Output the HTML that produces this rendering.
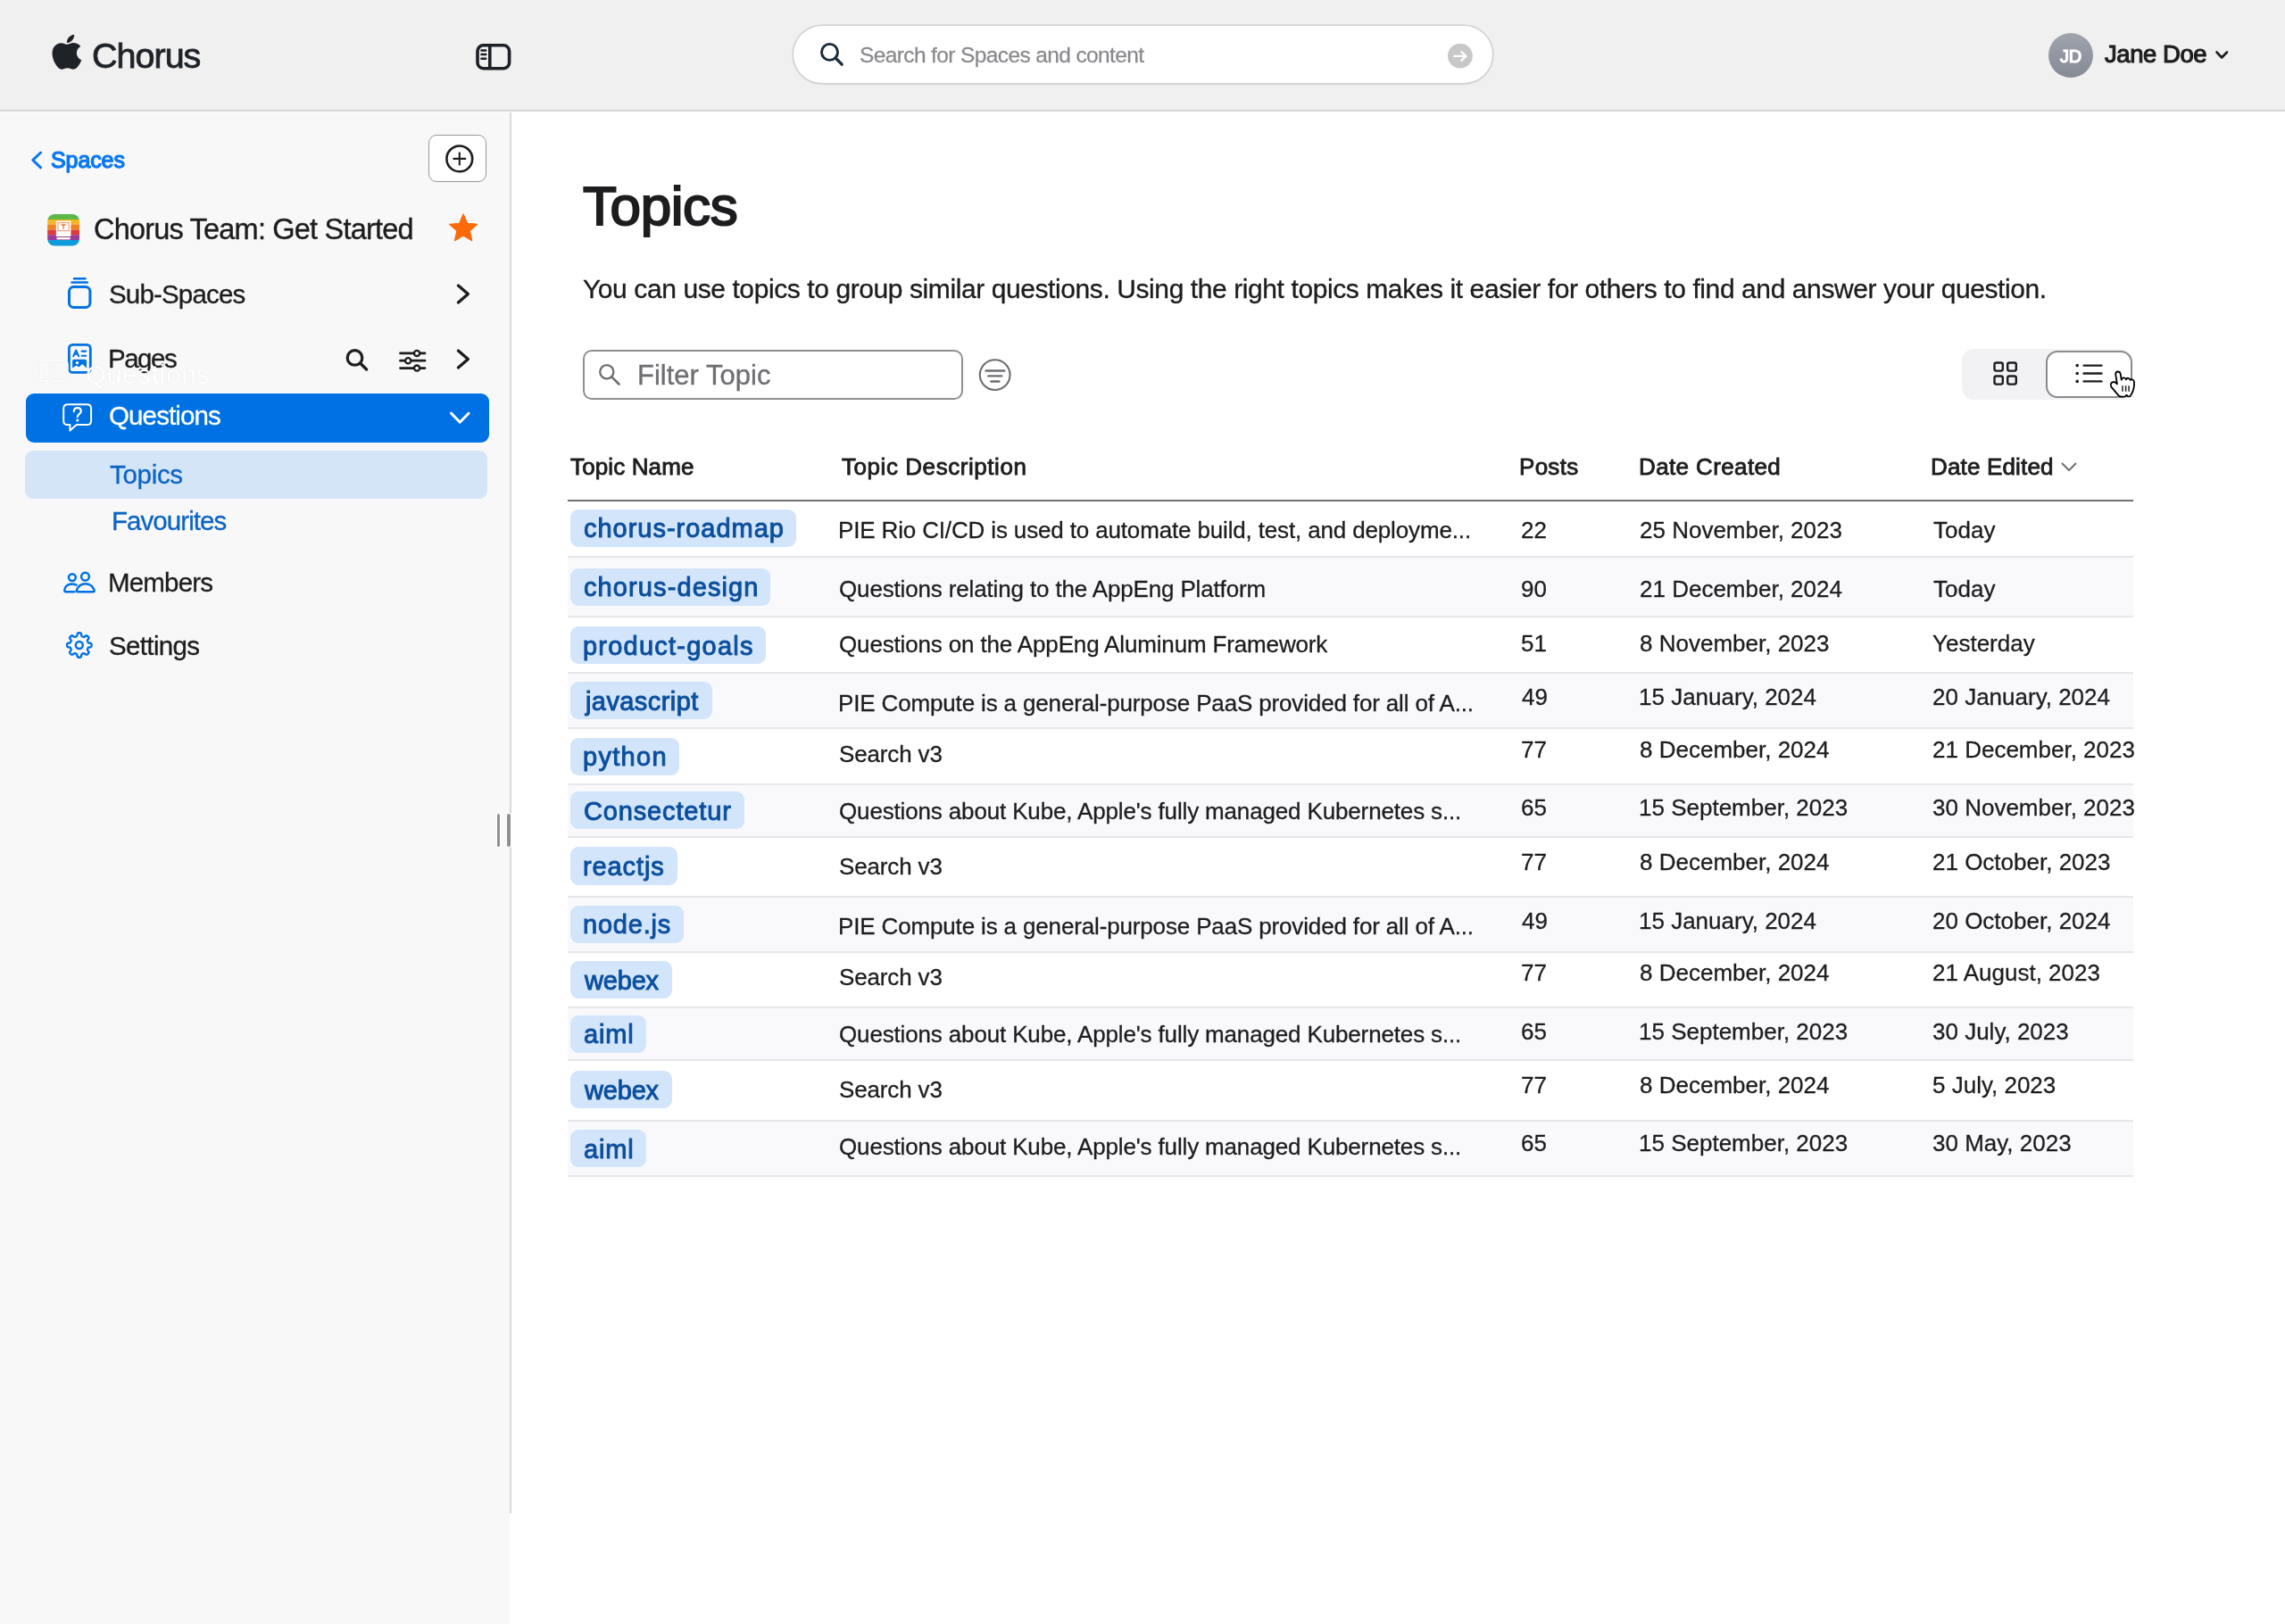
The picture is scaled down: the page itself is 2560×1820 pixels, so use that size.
<!DOCTYPE html>
<html><head><meta charset="utf-8"><title>Chorus Topics</title>
<style>
html,body{margin:0;padding:0;width:2560px;height:1820px;overflow:hidden;background:#fff;}
body{position:relative;font-family:'Liberation Sans', sans-serif;}
.b{position:absolute;}
.t{position:absolute;white-space:pre;line-height:1;font-family:'Liberation Sans', sans-serif;will-change:transform;}
svg.i{position:absolute;left:0;top:0;overflow:visible;}
</style></head><body>
<div class="b" style="left:0px;top:0px;width:2560px;height:123px;background:#f0f0f0;"></div><div class="b" style="left:0px;top:123px;width:2560px;height:1.5px;background:#d6d6d6;"></div><div class="b" style="left:0px;top:126px;width:571px;height:1694px;background:#f8f8f8;"></div><div class="b" style="left:571px;top:126px;width:1.5px;height:1570px;background:#d9d9d9;"></div><div class="b" style="left:888.7px;top:29.4px;width:783.0999999999999px;height:63.199999999999996px;background:#fff;border-radius:32px;box-shadow:0 0 0 1.5px #d0d0d0,0 1px 3px rgba(0,0,0,0.15);"></div><div class="b" style="left:2295px;top:37px;width:50px;height:50px;background:linear-gradient(#a0a4ad,#858a95);border-radius:50%;"></div><div class="b" style="left:480.4px;top:151.3px;width:64.89999999999998px;height:52.5px;background:#fff;border:1.8px solid #999;border-radius:9px;box-sizing:border-box;"></div><div class="b" style="left:28.6px;top:440.7px;width:519.0px;height:55.19999999999999px;background:#0071e3;border-radius:9px;"></div><div class="b" style="left:27.5px;top:505px;width:518.5px;height:54.39999999999998px;background:#d5e5f8;border-radius:9px;"></div><div class="b" style="left:653px;top:391.6px;width:425.5999999999999px;height:56.0px;background:#fff;border:2px solid #8e8e93;border-radius:10px;box-sizing:border-box;"></div><div class="b" style="left:2198px;top:391px;width:191px;height:57px;background:#f2f2f4;border-radius:14px;"></div><div class="b" style="left:2292px;top:393px;width:97px;height:53px;background:#fff;border:2px solid #8a8a8e;border-radius:13px;box-sizing:border-box;"></div><div class="b" style="left:636px;top:560px;width:1754px;height:2px;background:#6e6e73;"></div><div class="b" style="left:636px;top:623.4px;width:1754px;height:2.0px;background:#e6e6eb;"></div><div class="b" style="left:636px;top:625.4px;width:1754px;height:65.10000000000002px;background:#f9f9fb;"></div><div class="b" style="left:636px;top:689.5px;width:1754px;height:2.0px;background:#e6e6eb;"></div><div class="b" style="left:636px;top:753.2px;width:1754px;height:2.0px;background:#e6e6eb;"></div><div class="b" style="left:636px;top:755.2px;width:1754px;height:61.09999999999991px;background:#f9f9fb;"></div><div class="b" style="left:636px;top:815.3px;width:1754px;height:2.0px;background:#e6e6eb;"></div><div class="b" style="left:636px;top:877.6px;width:1754px;height:2.0px;background:#e6e6eb;"></div><div class="b" style="left:636px;top:879.6px;width:1754px;height:58.10000000000002px;background:#f9f9fb;"></div><div class="b" style="left:636px;top:936.7px;width:1754px;height:2.0px;background:#e6e6eb;"></div><div class="b" style="left:636px;top:1004.1px;width:1754px;height:2.0px;background:#e6e6eb;"></div><div class="b" style="left:636px;top:1006.1px;width:1754px;height:61.19999999999993px;background:#f9f9fb;"></div><div class="b" style="left:636px;top:1066.3px;width:1754px;height:2.0px;background:#e6e6eb;"></div><div class="b" style="left:636px;top:1128.3px;width:1754px;height:2.0px;background:#e6e6eb;"></div><div class="b" style="left:636px;top:1130.3px;width:1754px;height:57.90000000000009px;background:#f9f9fb;"></div><div class="b" style="left:636px;top:1187.2px;width:1754px;height:2.0px;background:#e6e6eb;"></div><div class="b" style="left:636px;top:1254.6px;width:1754px;height:2.0px;background:#e6e6eb;"></div><div class="b" style="left:636px;top:1256.6px;width:1754px;height:61.5px;background:#f9f9fb;"></div><div class="b" style="left:636px;top:1317.1px;width:1754px;height:2.0px;background:#e6e6eb;"></div><div class="b" style="left:638.6px;top:570.6px;width:253.39999999999998px;height:42.299999999999955px;background:#d3e5fb;border-radius:9px;"></div><div class="b" style="left:638.6px;top:636.5px;width:224.89999999999998px;height:42.0px;background:#d3e5fb;border-radius:9px;"></div><div class="b" style="left:638.6px;top:702px;width:219.39999999999998px;height:42px;background:#d3e5fb;border-radius:9px;"></div><div class="b" style="left:638.6px;top:764.4px;width:159.39999999999998px;height:42.10000000000002px;background:#d3e5fb;border-radius:9px;"></div><div class="b" style="left:638.6px;top:826.8px;width:122.19999999999993px;height:42.0px;background:#d3e5fb;border-radius:9px;"></div><div class="b" style="left:638.6px;top:887.2px;width:195.10000000000002px;height:42.19999999999993px;background:#d3e5fb;border-radius:9px;"></div><div class="b" style="left:638.6px;top:949.3px;width:120.0px;height:42.30000000000007px;background:#d3e5fb;border-radius:9px;"></div><div class="b" style="left:638.6px;top:1014.8px;width:127.39999999999998px;height:42.299999999999955px;background:#d3e5fb;border-radius:9px;"></div><div class="b" style="left:638.6px;top:1077.2px;width:114.89999999999998px;height:42.299999999999955px;background:#d3e5fb;border-radius:9px;"></div><div class="b" style="left:638.6px;top:1137.8px;width:85.10000000000002px;height:42.100000000000136px;background:#d3e5fb;border-radius:9px;"></div><div class="b" style="left:638.6px;top:1200.2px;width:114.89999999999998px;height:42.09999999999991px;background:#d3e5fb;border-radius:9px;"></div><div class="b" style="left:638.6px;top:1266.3px;width:85.10000000000002px;height:41.600000000000136px;background:#d3e5fb;border-radius:9px;"></div><div class="b" style="left:555.5px;top:911px;width:5.7999999999999545px;height:38.5px;background:#fff;border-radius:2px;"></div><div class="b" style="left:567.3px;top:911px;width:5.900000000000091px;height:38.5px;background:#fff;border-radius:2px;"></div><div class="b" style="left:556.5px;top:912px;width:3.7999999999999545px;height:36.5px;background:#909090;border-radius:2px;"></div><div class="b" style="left:568.3px;top:912px;width:3.900000000000091px;height:36.5px;background:#909090;border-radius:2px;"></div>
<svg class="i" width="2560" height="1820" viewBox="0 0 2560 1820"><path transform="translate(58.15,35.91) scale(0.0871)" fill="#1f2328" d="M318.7 268.7c-.2-36.7 16.4-64.4 50-84.8-18.8-26.9-47.2-41.7-84.7-44.6-35.5-2.8-74.3 20.7-88.5 20.7-15 0-49.4-19.7-76.4-19.7C63.3 141.2 4 184.8 4 273.5q0 39.3 14.4 81.2c12.8 36.7 59 126.7 107.2 125.2 25.2-.6 43-17.9 75.8-17.9 31.8 0 48.3 17.9 76.4 17.9 48.6-.7 90.4-82.5 102.6-119.3-65.2-30.7-61.7-90-61.7-91.9zm-56.6-164.2c27.3-32.4 24.8-61.9 24-72.5-24.1 1.4-52 16.4-67.9 34.9-17.5 19.8-27.8 44.3-25.6 71.9 26.1 2 49.9-11.4 69.5-34.3z"/><g fill="none" stroke="#1d2024" stroke-width="3.6" stroke-linecap="round"><rect x="535" y="50.8" width="35.6" height="25.9" rx="6.5"/><line x1="548.8" y1="51" x2="548.8" y2="76.5"/><g stroke-width="2.6"><line x1="539.5" y1="56.5" x2="544.2" y2="56.5"/><line x1="539.5" y1="61" x2="544.2" y2="61"/><line x1="539.5" y1="65.7" x2="544.2" y2="65.7"/></g></g><g fill="none" stroke="#1c2b3a" stroke-linecap="round"><circle cx="929.5" cy="58.4" r="9" stroke-width="2.9"/><line x1="936.2" y1="65.1" x2="943.2" y2="72.1" stroke-width="3.4"/></g><circle cx="1635.9" cy="62.7" r="13.9" fill="#c8c8c8"/><g fill="none" stroke="#fff" stroke-width="2.3" stroke-linecap="round" stroke-linejoin="round"><line x1="1629.3" y1="62.9" x2="1642.2" y2="62.9"/><polyline points="1637.3,58 1642.4,62.9 1637.3,67.8"/></g><polyline points="2483.5,58.5 2489.2,64.5 2495,58.5" fill="none" stroke="#1d1d1f" stroke-width="2.6" stroke-linecap="round" stroke-linejoin="round"/><polyline points="45.6,171 36.8,179.4 45.6,187.8" fill="none" stroke="#0a78f2" stroke-width="3" stroke-linecap="round" stroke-linejoin="round"/><g fill="none" stroke="#1d1d1f" stroke-width="2.6" stroke-linecap="round"><circle cx="514.8" cy="177.9" r="14.4"/><line x1="508.3" y1="177.9" x2="521.3" y2="177.9" stroke-width="2.1"/><line x1="514.8" y1="171.4" x2="514.8" y2="184.4" stroke-width="2.1"/></g><defs><clipPath id="sp"><rect x="53.2" y="240" width="35.8" height="35.6" rx="8"/></clipPath></defs><g clip-path="url(#sp)"><rect x="53" y="239" width="37" height="7" fill="#5cb946"/><rect x="53" y="246" width="37" height="5.6" fill="#f8b526"/><rect x="53" y="251.6" width="37" height="6" fill="#f08120"/><rect x="53" y="257.6" width="37" height="5.6" fill="#df3a3a"/><rect x="53" y="263.2" width="37" height="5.8" fill="#973d98"/><rect x="53" y="269" width="37" height="7" fill="#0d9ddb"/></g><rect x="62.8" y="247.6" width="16.6" height="17.4" fill="#fff" rx="0.8"/><rect x="65" y="249.6" width="12.2" height="9" fill="none" stroke="#f3a17a" stroke-width="1.2"/><path d="M68.5,252 h5 M71,252 v4.5" stroke="#f07030" stroke-width="1.3" fill="none"/><rect x="63.6" y="266" width="15" height="2.4" fill="#fff"/><polygon points="519.10,240.00 523.53,250.30 534.70,251.33 526.27,258.73 528.74,269.67 519.10,263.94 509.46,269.67 511.93,258.73 503.50,251.33 514.67,250.30" fill="#fa6a0a" stroke="#fa6a0a" stroke-width="1.2" stroke-linejoin="round"/><g fill="none" stroke="#0071e3" stroke-width="3" stroke-linecap="round"><rect x="77.5" y="321.5" width="23.4" height="23" rx="5"/><line x1="83" y1="312.2" x2="95.5" y2="312.2" stroke-width="2.4"/><line x1="80.5" y1="316.5" x2="97.8" y2="316.5" stroke-width="2.4"/></g><polyline points="513.4,320 524.4,329.5 513.4,339" fill="none" stroke="#1d1d1f" stroke-width="3.3" stroke-linecap="round" stroke-linejoin="round"/><polyline points="513.4,393 524.4,402.5 513.4,412" fill="none" stroke="#1d1d1f" stroke-width="3.3" stroke-linecap="round" stroke-linejoin="round"/><g fill="none" stroke="#0071e3" stroke-width="2.8"><rect x="77.4" y="386.4" width="23.9" height="31" rx="4"/></g><g fill="none" stroke="#0071e3" stroke-width="2.1" stroke-linecap="round" stroke-linejoin="round"><polyline points="82.3,399.2 85.2,392.6 88.1,399.2"/><line x1="83.4" y1="396.8" x2="87" y2="396.8"/><line x1="91.6" y1="393.6" x2="96.2" y2="393.6"/><line x1="91.6" y1="398.7" x2="96.2" y2="398.7"/></g><path d="M81.1,404.6 Q81.1,402.7 83,402.7 L95.1,402.7 Q97,402.7 97,404.6 L97,412.4 L92.2,407.9 L88.2,411.4 L85.8,409.5 L81.1,412.4 Z" fill="#0071e3"/><circle cx="86.5" cy="406.6" r="1.7" fill="#fff"/><g fill="none" stroke="#1d1d1f" stroke-linecap="round"><circle cx="397.5" cy="400.9" r="8.3" stroke-width="3.2"/><line x1="403.8" y1="407.3" x2="410.6" y2="414" stroke-width="3.4"/></g><g fill="none" stroke="#1d1d1f" stroke-width="2.7" stroke-linecap="round"><line x1="448.5" y1="395.9" x2="476" y2="395.9"/><line x1="448.5" y1="404.2" x2="476" y2="404.2"/><line x1="448.5" y1="412.6" x2="476" y2="412.6"/></g><g fill="#f8f8f8" stroke="#1d1d1f" stroke-width="2.3"><circle cx="467.1" cy="395.9" r="3.1"/><circle cx="457.2" cy="404.2" r="3.1"/><circle cx="467.1" cy="412.6" r="3.1"/></g><g transform="translate(0,0)" fill="none" stroke="#fff" stroke-width="2.0" stroke-linecap="round" stroke-linejoin="round" ><path d="M76.5,476 H75.8 C72.8,476 71.2,474.4 71.2,471.4 V457.8 C71.2,454.8 72.8,453.2 75.8,453.2 H97.5 C100.5,453.2 102.1,454.8 102.1,457.8 V471.4 C102.1,474.4 100.5,476 97.5,476 H85.8 L78.4,482.6 V476 Z"/><path d="M82.8,461.2 C82.8,458.6 84.6,457.2 86.8,457.2 C89,457.2 90.8,458.6 90.8,460.9 C90.8,463.6 86.8,464.2 86.8,467.2" stroke-width="2.2"/><circle cx="86.8" cy="471" r="0.9" fill="#fff" stroke-width="1.4"/></g><polyline points="505.6,463.2 515.2,473.2 525,463.2" fill="none" stroke="#fff" stroke-width="3" stroke-linecap="round" stroke-linejoin="round"/><g fill="none" stroke="#0071e3" stroke-width="2.5" stroke-linecap="round" stroke-linejoin="round"><circle cx="80.9" cy="647.1" r="3.9"/><circle cx="95.5" cy="646.2" r="4.4"/><path d="M85.6,655.6 C84,654.9 82.3,654.5 80.6,654.5 C75.3,654.5 72.3,657.8 72.3,661.6 C72.3,662.6 72.8,663.3 73.9,663.3 H83.2"/><path d="M87.3,663.3 C85.8,663.3 85.4,662.5 85.9,661.2 C87.4,657.2 91,654.3 95.7,654.3 C100.4,654.3 104,657.2 105.5,661.2 C106,662.5 105.6,663.3 104.1,663.3 Z"/></g><polygon points="102.55,723.00 102.54,723.36 102.51,723.72 102.45,724.07 102.34,724.42 102.12,724.75 101.70,725.04 101.00,725.26 100.14,725.41 99.44,725.55 99.00,725.73 98.76,725.95 98.60,726.18 98.48,726.43 98.37,726.67 98.27,726.92 98.17,727.17 98.07,727.42 97.98,727.68 97.93,727.96 97.95,728.28 98.13,728.72 98.52,729.31 99.02,730.03 99.37,730.68 99.46,731.18 99.38,731.57 99.21,731.89 99.00,732.19 98.77,732.46 98.52,732.72 98.26,732.97 97.99,733.20 97.69,733.41 97.37,733.58 96.98,733.66 96.48,733.57 95.83,733.22 95.11,732.72 94.52,732.33 94.08,732.15 93.76,732.13 93.48,732.18 93.22,732.27 92.97,732.37 92.72,732.47 92.47,732.57 92.23,732.68 91.98,732.80 91.75,732.96 91.53,733.20 91.35,733.64 91.21,734.34 91.06,735.20 90.84,735.90 90.55,736.32 90.22,736.54 89.87,736.65 89.52,736.71 89.16,736.74 88.80,736.75 88.44,736.74 88.08,736.71 87.73,736.65 87.38,736.54 87.05,736.32 86.76,735.90 86.54,735.20 86.39,734.34 86.25,733.64 86.07,733.20 85.85,732.96 85.62,732.80 85.37,732.68 85.13,732.57 84.88,732.47 84.63,732.37 84.38,732.27 84.12,732.18 83.84,732.13 83.52,732.15 83.08,732.33 82.49,732.72 81.77,733.22 81.12,733.57 80.62,733.66 80.23,733.58 79.91,733.41 79.61,733.20 79.34,732.97 79.08,732.72 78.83,732.46 78.60,732.19 78.39,731.89 78.22,731.57 78.14,731.18 78.23,730.68 78.58,730.03 79.08,729.31 79.47,728.72 79.65,728.28 79.67,727.96 79.62,727.68 79.53,727.42 79.43,727.17 79.33,726.92 79.23,726.67 79.12,726.43 79.00,726.18 78.84,725.95 78.60,725.73 78.16,725.55 77.46,725.41 76.60,725.26 75.90,725.04 75.48,724.75 75.26,724.42 75.15,724.07 75.09,723.72 75.06,723.36 75.05,723.00 75.06,722.64 75.09,722.28 75.15,721.93 75.26,721.58 75.48,721.25 75.90,720.96 76.60,720.74 77.46,720.59 78.16,720.45 78.60,720.27 78.84,720.05 79.00,719.82 79.12,719.57 79.23,719.33 79.33,719.08 79.43,718.83 79.53,718.58 79.62,718.32 79.67,718.04 79.65,717.72 79.47,717.28 79.08,716.69 78.58,715.97 78.23,715.32 78.14,714.82 78.22,714.43 78.39,714.11 78.60,713.81 78.83,713.54 79.08,713.28 79.34,713.03 79.61,712.80 79.91,712.59 80.23,712.42 80.62,712.34 81.12,712.43 81.77,712.78 82.49,713.28 83.08,713.67 83.52,713.85 83.84,713.87 84.12,713.82 84.38,713.73 84.63,713.63 84.88,713.53 85.13,713.43 85.37,713.32 85.62,713.20 85.85,713.04 86.07,712.80 86.25,712.36 86.39,711.66 86.54,710.80 86.76,710.10 87.05,709.68 87.38,709.46 87.73,709.35 88.08,709.29 88.44,709.26 88.80,709.25 89.16,709.26 89.52,709.29 89.87,709.35 90.22,709.46 90.55,709.68 90.84,710.10 91.06,710.80 91.21,711.66 91.35,712.36 91.53,712.80 91.75,713.04 91.98,713.20 92.23,713.32 92.47,713.43 92.72,713.53 92.97,713.63 93.22,713.73 93.48,713.82 93.76,713.87 94.08,713.85 94.52,713.67 95.11,713.28 95.83,712.78 96.48,712.43 96.98,712.34 97.37,712.42 97.69,712.59 97.99,712.80 98.26,713.03 98.52,713.28 98.77,713.54 99.00,713.81 99.21,714.11 99.38,714.43 99.46,714.82 99.37,715.32 99.02,715.97 98.52,716.69 98.13,717.28 97.95,717.72 97.93,718.04 97.98,718.32 98.07,718.58 98.17,718.83 98.27,719.08 98.37,719.33 98.48,719.57 98.60,719.82 98.76,720.05 99.00,720.27 99.44,720.45 100.14,720.59 101.00,720.74 101.70,720.96 102.12,721.25 102.34,721.58 102.45,721.93 102.51,722.28 102.54,722.64" fill="none" stroke="#0071e3" stroke-width="2.4" stroke-linejoin="round"/><circle cx="88.8" cy="723.0" r="4" fill="none" stroke="#0071e3" stroke-width="2.4"/><g transform="translate(-26.4,-49)" fill="none" stroke="rgba(255,255,255,0.92)" stroke-width="2.3" stroke-linecap="round" stroke-linejoin="round" style="filter:drop-shadow(0 0 0.6px rgba(0,0,0,0.18))"><path d="M76.5,476 H75.8 C72.8,476 71.2,474.4 71.2,471.4 V457.8 C71.2,454.8 72.8,453.2 75.8,453.2 H97.5 C100.5,453.2 102.1,454.8 102.1,457.8 V471.4 C102.1,474.4 100.5,476 97.5,476 H85.8 L78.4,482.6 V476 Z"/><path d="M82.8,461.2 C82.8,458.6 84.6,457.2 86.8,457.2 C89,457.2 90.8,458.6 90.8,460.9 C90.8,463.6 86.8,464.2 86.8,467.2" stroke-width="2.2"/><circle cx="86.8" cy="471" r="0.9" fill="rgba(255,255,255,0.92)" stroke-width="1.4"/></g><g fill="none" stroke="#6e6e73" stroke-linecap="round"><circle cx="679.8" cy="416.8" r="7.6" stroke-width="2.3"/><line x1="685.3" y1="422.3" x2="693.5" y2="430.5" stroke-width="2.6"/></g><g fill="none" stroke="#6e6e73" stroke-linecap="round"><circle cx="1114.7" cy="420.1" r="16.9" stroke-width="2.1"/><line x1="1104.6" y1="415.5" x2="1125.2" y2="415.5" stroke-width="2.4"/><line x1="1107.4" y1="421.4" x2="1122.2" y2="421.4" stroke-width="2.4"/><line x1="1110.4" y1="427.5" x2="1119.4" y2="427.5" stroke-width="2.4"/></g><g fill="none" stroke="#1d1d1f" stroke-width="2.4"><rect x="2234.5" y="406.5" width="9.3" height="9.1" rx="2"/><rect x="2249.2" y="406.5" width="9.6" height="9.1" rx="2"/><rect x="2234.5" y="421.5" width="9.3" height="9.1" rx="2"/><rect x="2249.2" y="421.5" width="9.6" height="9.1" rx="2"/></g><g fill="#1d1d1f"><circle cx="2327.2" cy="409.6" r="1.8"/><circle cx="2327.2" cy="418.5" r="1.8"/><circle cx="2327.2" cy="427.4" r="1.8"/></g><g stroke="#1d1d1f" stroke-width="2.4" stroke-linecap="round"><line x1="2334.6" y1="409.6" x2="2354.4" y2="409.6"/><line x1="2334.6" y1="418.5" x2="2354.4" y2="418.5"/><line x1="2334.6" y1="427.4" x2="2354.4" y2="427.4"/></g><polyline points="2310.5,519.5 2318,527 2325.5,519.5" fill="none" stroke="#6e6e73" stroke-width="1.9" stroke-linecap="round" stroke-linejoin="round"/><path d="M2366.6,428.4 C2364.4,429.6 2364.2,432 2365.8,434.1 L2373.4,443.2 C2374.3,444.2 2375.4,444.6 2377,444.6 L2381,444.4 L2382.5,442.6 L2384,444.3 L2386.6,444.1 C2389,440.2 2391,436 2391,431.2 L2391,428.2 C2391,425.6 2388.4,424.4 2386.6,425.9 C2386.1,423.4 2382.9,423 2381.9,425.3 C2381.2,422.7 2377.4,422.7 2376.7,425.7 L2375.7,419.1 C2375.1,415.6 2370.3,415.6 2370.2,419.2 L2371.9,430.4 C2370.4,428.4 2368.3,427.5 2366.6,428.4 Z" fill="#fff" stroke="#000" stroke-width="1.8" stroke-linejoin="round"/><path d="M2378,432.3 V438.7 M2381.6,432.3 V438.7 M2385.1,432.3 V438.7" stroke="#222" stroke-width="1.5"/></svg>
<div class="t" style="left:103.1px;top:42.6px;font-size:39.5px;font-weight:400;color:#1f2328;letter-spacing:-0.994px;-webkit-text-stroke:0.87px #1f2328;">Chorus</div><div class="t" style="left:963.0px;top:50.1px;font-size:24.5px;font-weight:400;color:#8a8a8e;letter-spacing:-0.618px;-webkit-text-stroke:0.27px #8a8a8e;">Search for Spaces and content</div><div class="t" style="left:2307.6px;top:53.1px;font-size:20px;font-weight:400;color:#ffffff;letter-spacing:-0.200px;-webkit-text-stroke:1.20px #ffffff;">JD</div><div class="t" style="left:2357.6px;top:46.7px;font-size:27.5px;font-weight:400;color:#1d1d1f;letter-spacing:-0.443px;-webkit-text-stroke:1.10px #1d1d1f;">Jane Doe</div><div class="t" style="left:56.6px;top:167.2px;font-size:25px;font-weight:400;color:#0a78f2;letter-spacing:-0.090px;-webkit-text-stroke:1.25px #0a78f2;">Spaces</div><div class="t" style="left:105.0px;top:240.9px;font-size:32.5px;font-weight:400;color:#1d1d1f;letter-spacing:-0.800px;-webkit-text-stroke:0.36px #1d1d1f;">Chorus Team: Get Started</div><div class="t" style="left:122.0px;top:314.5px;font-size:29.5px;font-weight:400;color:#1d1d1f;letter-spacing:-0.833px;-webkit-text-stroke:0.32px #1d1d1f;">Sub-Spaces</div><div class="t" style="left:121.0px;top:387.4px;font-size:29.5px;font-weight:400;color:#1d1d1f;letter-spacing:-1.500px;-webkit-text-stroke:0.32px #1d1d1f;">Pages</div><div class="t" style="left:95.6px;top:405.0px;font-size:29.5px;font-weight:400;color:#ffffff;letter-spacing:0.800px;text-shadow:0 0 1px rgba(0,0,0,0.14);">Questions</div><div class="t" style="left:122.0px;top:451.0px;font-size:29.5px;font-weight:400;color:#ffffff;letter-spacing:-0.875px;-webkit-text-stroke:0.32px #ffffff;">Questions</div><div class="t" style="left:123.0px;top:517.0px;font-size:29.5px;font-weight:400;color:#0b64c4;letter-spacing:-0.300px;-webkit-text-stroke:0.32px #0b64c4;">Topics</div><div class="t" style="left:125.0px;top:569.0px;font-size:29.5px;font-weight:400;color:#0b64c4;letter-spacing:-0.944px;-webkit-text-stroke:0.32px #0b64c4;">Favourites</div><div class="t" style="left:121.0px;top:638.0px;font-size:29.5px;font-weight:400;color:#1d1d1f;letter-spacing:-0.833px;-webkit-text-stroke:0.32px #1d1d1f;">Members</div><div class="t" style="left:122.0px;top:709.0px;font-size:29.5px;font-weight:400;color:#1d1d1f;letter-spacing:-0.643px;-webkit-text-stroke:0.32px #1d1d1f;">Settings</div><div class="t" style="left:653.0px;top:200.0px;font-size:62px;font-weight:400;color:#1d1d1f;letter-spacing:-0.409px;-webkit-text-stroke:2.05px #1d1d1f;">Topics</div><div class="t" style="left:653.0px;top:308.8px;font-size:30px;font-weight:400;color:#1d1d1f;letter-spacing:-0.411px;-webkit-text-stroke:0.33px #1d1d1f;">You can use topics to group similar questions. Using the right topics makes it easier for others to find and answer your question.</div><div class="t" style="left:713.5px;top:404.6px;font-size:31px;font-weight:400;color:#6e6e73;letter-spacing:0.009px;-webkit-text-stroke:0.34px #6e6e73;">Filter Topic</div><div class="t" style="left:639.4px;top:510.0px;font-size:26px;font-weight:400;color:#1d1d1f;letter-spacing:0.127px;-webkit-text-stroke:0.86px #1d1d1f;">Topic Name</div><div class="t" style="left:943.4px;top:510.0px;font-size:26px;font-weight:400;color:#1d1d1f;letter-spacing:0.559px;-webkit-text-stroke:0.86px #1d1d1f;">Topic Description</div><div class="t" style="left:1702.4px;top:510.0px;font-size:26px;font-weight:400;color:#1d1d1f;letter-spacing:0.285px;-webkit-text-stroke:0.86px #1d1d1f;">Posts</div><div class="t" style="left:1835.9px;top:510.0px;font-size:26px;font-weight:400;color:#1d1d1f;letter-spacing:0.377px;-webkit-text-stroke:0.86px #1d1d1f;">Date Created</div><div class="t" style="left:2163.4px;top:510.0px;font-size:26px;font-weight:400;color:#1d1d1f;letter-spacing:0.164px;-webkit-text-stroke:0.86px #1d1d1f;">Date Edited</div><div class="t" style="left:653.5px;top:578.1px;font-size:29px;font-weight:400;color:#0b4f9d;letter-spacing:0.980px;-webkit-text-stroke:0.96px #0b4f9d;">chorus-roadmap</div><div class="t" style="left:939.0px;top:581.4px;font-size:26px;font-weight:400;color:#1d1d1f;letter-spacing:-0.150px;-webkit-text-stroke:0.29px #1d1d1f;">PIE Rio CI/CD is used to automate build, test, and deployme...</div><div class="t" style="left:1704.0px;top:581.0px;font-size:26px;font-weight:400;color:#1d1d1f;letter-spacing:0.000px;-webkit-text-stroke:0.29px #1d1d1f;">22</div><div class="t" style="left:1837.0px;top:581.0px;font-size:26px;font-weight:400;color:#1d1d1f;letter-spacing:0.000px;-webkit-text-stroke:0.29px #1d1d1f;">25 November, 2023</div><div class="t" style="left:2166.0px;top:581.0px;font-size:26px;font-weight:400;color:#1d1d1f;letter-spacing:0.000px;-webkit-text-stroke:0.29px #1d1d1f;">Today</div><div class="t" style="left:653.5px;top:644.0px;font-size:29px;font-weight:400;color:#0b4f9d;letter-spacing:1.104px;-webkit-text-stroke:0.96px #0b4f9d;">chorus-design</div><div class="t" style="left:940.0px;top:647.3px;font-size:26px;font-weight:400;color:#1d1d1f;letter-spacing:-0.150px;-webkit-text-stroke:0.29px #1d1d1f;">Questions relating to the AppEng Platform</div><div class="t" style="left:1704.0px;top:647.1px;font-size:26px;font-weight:400;color:#1d1d1f;letter-spacing:0.000px;-webkit-text-stroke:0.29px #1d1d1f;">90</div><div class="t" style="left:1837.0px;top:647.1px;font-size:26px;font-weight:400;color:#1d1d1f;letter-spacing:0.000px;-webkit-text-stroke:0.29px #1d1d1f;">21 December, 2024</div><div class="t" style="left:2166.0px;top:647.1px;font-size:26px;font-weight:400;color:#1d1d1f;letter-spacing:0.000px;-webkit-text-stroke:0.29px #1d1d1f;">Today</div><div class="t" style="left:652.5px;top:709.5px;font-size:29px;font-weight:400;color:#0b4f9d;letter-spacing:1.229px;-webkit-text-stroke:0.96px #0b4f9d;">product-goals</div><div class="t" style="left:940.0px;top:709.4px;font-size:26px;font-weight:400;color:#1d1d1f;letter-spacing:-0.150px;-webkit-text-stroke:0.29px #1d1d1f;">Questions on the AppEng Aluminum Framework</div><div class="t" style="left:1704.0px;top:707.9px;font-size:26px;font-weight:400;color:#1d1d1f;letter-spacing:0.000px;-webkit-text-stroke:0.29px #1d1d1f;">51</div><div class="t" style="left:1837.0px;top:707.9px;font-size:26px;font-weight:400;color:#1d1d1f;letter-spacing:0.000px;-webkit-text-stroke:0.29px #1d1d1f;">8 November, 2023</div><div class="t" style="left:2165.0px;top:707.9px;font-size:26px;font-weight:400;color:#1d1d1f;letter-spacing:0.000px;-webkit-text-stroke:0.29px #1d1d1f;">Yesterday</div><div class="t" style="left:655.5px;top:771.9px;font-size:29px;font-weight:400;color:#0b4f9d;letter-spacing:0.416px;-webkit-text-stroke:0.96px #0b4f9d;">javascript</div><div class="t" style="left:939.0px;top:774.7px;font-size:26px;font-weight:400;color:#1d1d1f;letter-spacing:-0.150px;-webkit-text-stroke:0.29px #1d1d1f;">PIE Compute is a general-purpose PaaS provided for all of A...</div><div class="t" style="left:1705.0px;top:767.9px;font-size:26px;font-weight:400;color:#1d1d1f;letter-spacing:0.000px;-webkit-text-stroke:0.29px #1d1d1f;">49</div><div class="t" style="left:1836.0px;top:767.9px;font-size:26px;font-weight:400;color:#1d1d1f;letter-spacing:0.000px;-webkit-text-stroke:0.29px #1d1d1f;">15 January, 2024</div><div class="t" style="left:2165.0px;top:767.9px;font-size:26px;font-weight:400;color:#1d1d1f;letter-spacing:0.000px;-webkit-text-stroke:0.29px #1d1d1f;">20 January, 2024</div><div class="t" style="left:652.5px;top:834.3px;font-size:29px;font-weight:400;color:#0b4f9d;letter-spacing:1.309px;-webkit-text-stroke:0.96px #0b4f9d;">python</div><div class="t" style="left:940.0px;top:831.8px;font-size:26px;font-weight:400;color:#1d1d1f;letter-spacing:-0.150px;-webkit-text-stroke:0.29px #1d1d1f;">Search v3</div><div class="t" style="left:1704.0px;top:826.8px;font-size:26px;font-weight:400;color:#1d1d1f;letter-spacing:0.000px;-webkit-text-stroke:0.29px #1d1d1f;">77</div><div class="t" style="left:1837.0px;top:826.8px;font-size:26px;font-weight:400;color:#1d1d1f;letter-spacing:0.000px;-webkit-text-stroke:0.29px #1d1d1f;">8 December, 2024</div><div class="t" style="left:2165.0px;top:826.8px;font-size:26px;font-weight:400;color:#1d1d1f;letter-spacing:0.000px;-webkit-text-stroke:0.29px #1d1d1f;">21 December, 2023</div><div class="t" style="left:653.5px;top:894.7px;font-size:29px;font-weight:400;color:#0b4f9d;letter-spacing:0.844px;-webkit-text-stroke:0.96px #0b4f9d;">Consectetur</div><div class="t" style="left:940.0px;top:896.0px;font-size:26px;font-weight:400;color:#1d1d1f;letter-spacing:-0.150px;-webkit-text-stroke:0.29px #1d1d1f;">Questions about Kube, Apple's fully managed Kubernetes s...</div><div class="t" style="left:1704.0px;top:892.3px;font-size:26px;font-weight:400;color:#1d1d1f;letter-spacing:0.000px;-webkit-text-stroke:0.29px #1d1d1f;">65</div><div class="t" style="left:1836.0px;top:892.3px;font-size:26px;font-weight:400;color:#1d1d1f;letter-spacing:0.000px;-webkit-text-stroke:0.29px #1d1d1f;">15 September, 2023</div><div class="t" style="left:2165.0px;top:892.3px;font-size:26px;font-weight:400;color:#1d1d1f;letter-spacing:0.000px;-webkit-text-stroke:0.29px #1d1d1f;">30 November, 2023</div><div class="t" style="left:652.5px;top:956.8px;font-size:29px;font-weight:400;color:#0b4f9d;letter-spacing:0.890px;-webkit-text-stroke:0.96px #0b4f9d;">reactjs</div><div class="t" style="left:940.0px;top:958.1px;font-size:26px;font-weight:400;color:#1d1d1f;letter-spacing:-0.150px;-webkit-text-stroke:0.29px #1d1d1f;">Search v3</div><div class="t" style="left:1704.0px;top:952.8px;font-size:26px;font-weight:400;color:#1d1d1f;letter-spacing:0.000px;-webkit-text-stroke:0.29px #1d1d1f;">77</div><div class="t" style="left:1837.0px;top:952.8px;font-size:26px;font-weight:400;color:#1d1d1f;letter-spacing:0.000px;-webkit-text-stroke:0.29px #1d1d1f;">8 December, 2024</div><div class="t" style="left:2165.0px;top:952.8px;font-size:26px;font-weight:400;color:#1d1d1f;letter-spacing:0.000px;-webkit-text-stroke:0.29px #1d1d1f;">21 October, 2023</div><div class="t" style="left:652.5px;top:1022.3px;font-size:29px;font-weight:400;color:#0b4f9d;letter-spacing:0.790px;-webkit-text-stroke:0.96px #0b4f9d;">node.js</div><div class="t" style="left:939.0px;top:1024.7px;font-size:26px;font-weight:400;color:#1d1d1f;letter-spacing:-0.150px;-webkit-text-stroke:0.29px #1d1d1f;">PIE Compute is a general-purpose PaaS provided for all of A...</div><div class="t" style="left:1705.0px;top:1018.5px;font-size:26px;font-weight:400;color:#1d1d1f;letter-spacing:0.000px;-webkit-text-stroke:0.29px #1d1d1f;">49</div><div class="t" style="left:1836.0px;top:1018.5px;font-size:26px;font-weight:400;color:#1d1d1f;letter-spacing:0.000px;-webkit-text-stroke:0.29px #1d1d1f;">15 January, 2024</div><div class="t" style="left:2165.0px;top:1018.5px;font-size:26px;font-weight:400;color:#1d1d1f;letter-spacing:0.000px;-webkit-text-stroke:0.29px #1d1d1f;">20 October, 2024</div><div class="t" style="left:654.5px;top:1084.7px;font-size:29px;font-weight:400;color:#0b4f9d;letter-spacing:-0.189px;-webkit-text-stroke:0.96px #0b4f9d;">webex</div><div class="t" style="left:940.0px;top:1081.7px;font-size:26px;font-weight:400;color:#1d1d1f;letter-spacing:-0.150px;-webkit-text-stroke:0.29px #1d1d1f;">Search v3</div><div class="t" style="left:1704.0px;top:1076.8px;font-size:26px;font-weight:400;color:#1d1d1f;letter-spacing:0.000px;-webkit-text-stroke:0.29px #1d1d1f;">77</div><div class="t" style="left:1837.0px;top:1076.8px;font-size:26px;font-weight:400;color:#1d1d1f;letter-spacing:0.000px;-webkit-text-stroke:0.29px #1d1d1f;">8 December, 2024</div><div class="t" style="left:2165.0px;top:1076.8px;font-size:26px;font-weight:400;color:#1d1d1f;letter-spacing:0.000px;-webkit-text-stroke:0.29px #1d1d1f;">21 August, 2023</div><div class="t" style="left:653.5px;top:1145.3px;font-size:29px;font-weight:400;color:#0b4f9d;letter-spacing:0.814px;-webkit-text-stroke:0.96px #0b4f9d;">aiml</div><div class="t" style="left:940.0px;top:1146.0px;font-size:26px;font-weight:400;color:#1d1d1f;letter-spacing:-0.150px;-webkit-text-stroke:0.29px #1d1d1f;">Questions about Kube, Apple's fully managed Kubernetes s...</div><div class="t" style="left:1704.0px;top:1143.0px;font-size:26px;font-weight:400;color:#1d1d1f;letter-spacing:0.000px;-webkit-text-stroke:0.29px #1d1d1f;">65</div><div class="t" style="left:1836.0px;top:1143.0px;font-size:26px;font-weight:400;color:#1d1d1f;letter-spacing:0.000px;-webkit-text-stroke:0.29px #1d1d1f;">15 September, 2023</div><div class="t" style="left:2165.0px;top:1143.0px;font-size:26px;font-weight:400;color:#1d1d1f;letter-spacing:0.000px;-webkit-text-stroke:0.29px #1d1d1f;">30 July, 2023</div><div class="t" style="left:654.5px;top:1207.7px;font-size:29px;font-weight:400;color:#0b4f9d;letter-spacing:-0.189px;-webkit-text-stroke:0.96px #0b4f9d;">webex</div><div class="t" style="left:940.0px;top:1208.1px;font-size:26px;font-weight:400;color:#1d1d1f;letter-spacing:-0.150px;-webkit-text-stroke:0.29px #1d1d1f;">Search v3</div><div class="t" style="left:1704.0px;top:1202.8px;font-size:26px;font-weight:400;color:#1d1d1f;letter-spacing:0.000px;-webkit-text-stroke:0.29px #1d1d1f;">77</div><div class="t" style="left:1837.0px;top:1202.8px;font-size:26px;font-weight:400;color:#1d1d1f;letter-spacing:0.000px;-webkit-text-stroke:0.29px #1d1d1f;">8 December, 2024</div><div class="t" style="left:2165.0px;top:1202.8px;font-size:26px;font-weight:400;color:#1d1d1f;letter-spacing:0.000px;-webkit-text-stroke:0.29px #1d1d1f;">5 July, 2023</div><div class="t" style="left:653.5px;top:1273.8px;font-size:29px;font-weight:400;color:#0b4f9d;letter-spacing:0.814px;-webkit-text-stroke:0.96px #0b4f9d;">aiml</div><div class="t" style="left:940.0px;top:1272.3px;font-size:26px;font-weight:400;color:#1d1d1f;letter-spacing:-0.150px;-webkit-text-stroke:0.29px #1d1d1f;">Questions about Kube, Apple's fully managed Kubernetes s...</div><div class="t" style="left:1704.0px;top:1268.4px;font-size:26px;font-weight:400;color:#1d1d1f;letter-spacing:0.000px;-webkit-text-stroke:0.29px #1d1d1f;">65</div><div class="t" style="left:1836.0px;top:1268.4px;font-size:26px;font-weight:400;color:#1d1d1f;letter-spacing:0.000px;-webkit-text-stroke:0.29px #1d1d1f;">15 September, 2023</div><div class="t" style="left:2165.0px;top:1268.4px;font-size:26px;font-weight:400;color:#1d1d1f;letter-spacing:0.000px;-webkit-text-stroke:0.29px #1d1d1f;">30 May, 2023</div>
</body></html>
